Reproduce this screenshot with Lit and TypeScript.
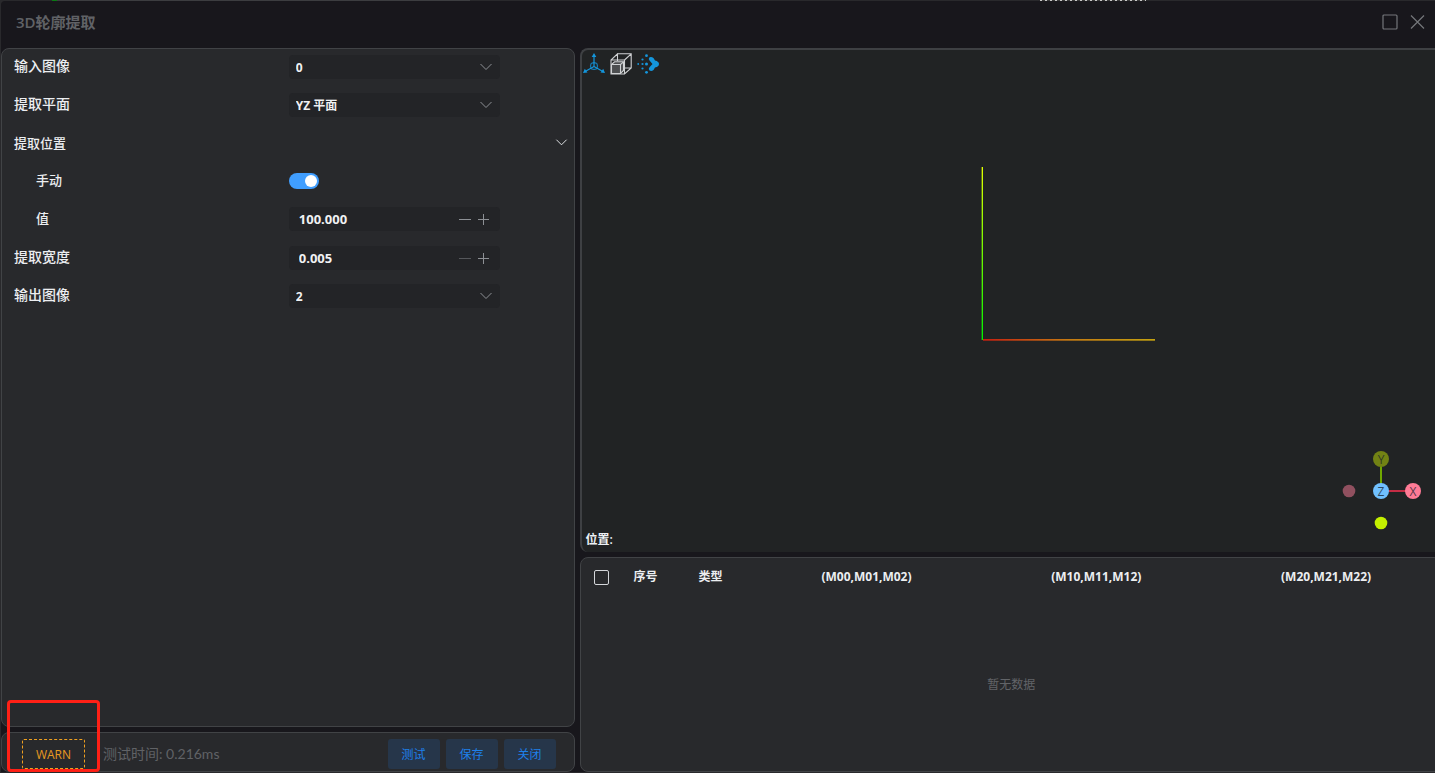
import { LitElement, html, css, svg } from "lit";
import { customElement, property, state } from "lit/decorators.js";

const chevron = svg`<path d="M1.5 4 L7 9.5 L12.5 4" fill="none" stroke="currentColor" stroke-width="1"/>`;

@customElement("select-field")
class SelectField extends LitElement {
  static styles = css`
    :host { display: grid; height: 24px; min-width: 0; }
    .select, .arrow { grid-area: 1 / 1; }
    .select {
      appearance: none; width: 100%; height: 24px; margin: 0; padding: 1px 30px 0 7px;
      border: 0; border-radius: 4px; background: #232427; color: #f0f1f3;
      font: 700 12px/23px "Open Sans", "Noto Sans CJK SC", sans-serif; outline: none;
    }
    .arrow { justify-self: end; align-self: center; width: 14px; height: 14px; margin-right: 7px; color: #8d9095; pointer-events: none; }
  `;
  @property() value = "";
  @property() label = "";
  render() {
    return html`<select class="select" aria-label=${this.label}><option>${this.value}</option></select>
      <svg class="arrow" viewBox="0 0 14 14">${chevron}</svg>`;
  }
}

@customElement("number-field")
class NumberField extends LitElement {
  static styles = css`
    :host { display: flex; align-items: center; height: 24px; min-width: 0; border-radius: 4px; background: #232427; padding-right: 8px; box-sizing: border-box; }
    .input {
      flex: 1; min-width: 0; height: 24px; margin: 0; padding: 0 0 0 10px; border: 0; background: none;
      color: #f0f1f3; font: 700 13px/24px "Open Sans", "Noto Sans CJK SC", sans-serif; outline: none;
    }
    .step { display: flex; align-items: center; justify-content: center; width: 18px; height: 24px; padding: 0; border: 0; background: none; color: #8d9095; }
    .step:disabled { color: #55575b; }
    .glyph { width: 12px; height: 12px; }
  `;
  @property() value = "";
  @property() label = "";
  @property({ type: Boolean }) atMin = false;
  render() {
    return html`<input class="input" type="text" inputmode="decimal" aria-label=${this.label} .value=${this.value} />
      <button class="step" aria-label="减少" ?disabled=${this.atMin}><svg class="glyph" viewBox="0 0 12 12"><path d="M0 6.5H12" stroke="currentColor"/></svg></button>
      <button class="step" aria-label="增加"><svg class="glyph" viewBox="0 0 12 12"><path d="M1 6.5H12M6.5 1V12" stroke="currentColor"/></svg></button>`;
  }
}

@customElement("scene-view")
class SceneView extends LitElement {
  static styles = css`
    :host {
      position: relative; display: flex; flex-direction: column; justify-content: space-between; box-sizing: border-box;
      border: solid #3e4043; border-width: 2px 0 0 2px; border-radius: 8px 0 0 8px; background: #212324; overflow: hidden;
    }
    .tools { display: flex; gap: 5px; padding: 3px 0 0 1px; }
    .tool { display: flex; padding: 0; border: 0; background: none; width: 22px; height: 22px; }
    .position { padding: 0 4px 3px; color: #eef2f6; font-size: 12px; font-weight: 600; line-height: 18px; }
    .axes { position: absolute; left: 399px; top: 117px; width: 175px; height: 175px; }
    .gizmo { position: absolute; right: 13px; bottom: 20px; width: 84px; height: 84px; }
    .letter { font: 12px "Open Sans", sans-serif; fill: #16202c; fill-opacity: 0.75; text-anchor: middle; }
  `;
  render() {
    return html`
      <div class="tools">
        <button class="tool" aria-label="坐标轴">
          <svg width="22" height="22" viewBox="0 0 22 22" fill="none" stroke="#1496dc">
            <path d="M11 3V13.500M11 13.500L3 18M11 13.500L19 18" stroke-width="1.200"/>
            <circle cx="11" cy="13" r="3.700" stroke-width="1" stroke-opacity=".7"/>
            <path d="M8 10.500H14V16H8Z" stroke-width=".7" stroke-opacity=".5"/>
            <path d="M11 0L13.300 4H8.700ZM0 20L1.800 15.800L4.500 19.500ZM22 20L20.200 15.800L17.500 19.500Z" fill="#1496dc" stroke="none"/>
          </svg>
        </button>
        <button class="tool" aria-label="立方体">
          <svg width="22" height="22" viewBox="0 0 22 22" fill="none" stroke="#cfd1d3" stroke-width="1.100">
            <path d="M1 7H14.500M7.500 .8H21.200V15L14.500 21H1V7L7.500 .8V8M14.500 7L21.200 .8M14.500 7V21M14 15H21.200"/>
            <path d="M1.500 11.500L4.500 8.800H13.500V17.500L10.500 20.500H1.500Z" fill="#4c4e50"/>
            <path d="M1.500 11.500H10.500V20.500M10.500 11.500L13.500 8.800"/>
          </svg>
        </button>
        <button class="tool" aria-label="点云">
          <svg width="22" height="22" viewBox="0 0 22 22" fill="#1496dc">
            <path d="M12.500 4.300Q14.500 3.300 16.500 5L18 7.500Q22 8.500 22 11Q22 13.500 18 14.500L16.500 17Q14.500 18.700 12.500 17.500Q11 16 12.500 14.300L15.500 11L12.500 7.500Q11 6 12.500 4.300Z"/>
            <circle cx="9.500" cy="2.700" r="1.400"/><circle cx="5.500" cy="6.500" r="1.100"/><circle cx="9.500" cy="11" r="1.500"/>
            <circle cx="5.500" cy="11" r="1.100"/><circle cx="1.200" cy="11" r=".9"/><circle cx="5.500" cy="15.500" r="1.100"/><circle cx="9.500" cy="19.300" r="1.400"/>
          </svg>
        </button>
      </div>
      <svg class="axes" viewBox="0 0 175 175">
        <defs>
          <linearGradient id="gy" x1="0" y1="1" x2="0" y2="0"><stop stop-color="#00f000"/><stop offset="1" stop-color="#e0ff00"/></linearGradient>
          <linearGradient id="gx"><stop stop-color="#c81e10"/><stop offset=".5" stop-color="#c47a12"/><stop offset="1" stop-color="#c4a210"/></linearGradient>
        </defs>
        <rect x="0" y="0" width="1" height="173" fill="url(#gy)" fill-opacity=".35"/>
        <rect x="1" y="0" width="1" height="173" fill="url(#gy)"/>
        <rect x="2" y="172" width="172" height="1" fill="url(#gx)"/>
        <rect x="2" y="173" width="172" height="1" fill="url(#gx)" fill-opacity=".7"/>
      </svg>
      <svg class="gizmo" viewBox="-43 -43 84 84">
        <path d="M0 0V-32" stroke="#70a800" stroke-width="2"/>
        <path d="M0 0H32" stroke="#c42c44" stroke-width="2"/>
        <circle cx="-32" r="6.300" fill="#90505f"/><circle cy="32" r="6.300" fill="#c4f000"/>
        <circle cy="-32" r="8" fill="#728214"/><circle cx="32" r="8" fill="#ff7b96"/><circle r="8" fill="#70c0ff"/>
        <text class="letter" x="0" y="-27.500">Y</text><text class="letter" x="32" y="4.500">X</text><text class="letter" x="0" y="4.500">Z</text>
      </svg>
      <div class="position">位置:</div>`;
  }
}

@customElement("app-root")
class AppRoot extends LitElement {
  static styles = css`
    :host {
      display: flex; flex-direction: column; box-sizing: border-box; height: 100vh; overflow: hidden; position: relative;
      padding: 1px 0 1px 1px; color: #eceef1;
      background:
        linear-gradient(90deg, transparent 52px, #0a7a14 52px 57px, #3c3d40 57px 470px, transparent 470px) 0 0 / 100% 1px no-repeat,
        repeating-linear-gradient(90deg, #c8c8c8 0 2px, #3a3a3a 2px 5px) 1040px 0 / 106px 1px no-repeat,
        #29292c;
      font-family: "Open Sans", "Noto Sans CJK SC", sans-serif; font-size: 14px;
    }
    .window { flex: 1; min-height: 0; display: flex; flex-direction: column; background: #18171c; border-radius: 4px 0 0 0; }
    .title-bar { flex: none; display: flex; align-items: center; justify-content: space-between; height: 47px; padding: 0 10px 6px 15px; box-sizing: border-box; color: #606266; }
    .title { margin: 0; font-size: 15px; line-height: 22px; font-weight: 600; }
    .window-actions { display: flex; gap: 12px; }
    .window-action { display: flex; padding: 0; border: 0; background: none; color: #74767a; }
    .body { flex: 1; min-height: 0; display: grid; grid-template-columns: 40% minmax(0, 1fr); gap: 5px; }
    .column { display: flex; flex-direction: column; gap: 5px; min-height: 0; min-width: 0; }
    .card { box-sizing: border-box; border: 1px solid #414346; border-radius: 8px; background: #28292c; }
    .params { flex: 1; display: flex; flex-direction: column; gap: 14px; padding: 6px 6px 6px 12px; }
    .group { display: flex; flex-direction: column; gap: 14px; padding-bottom: 1px; }
    .row { display: grid; grid-template-columns: 275fr 211fr 68fr; align-items: center; height: 24px; }
    .label { font-weight: 500; line-height: 20px; padding-bottom: 2px; }
    .sub { font-size: 13px; }
    .nested { padding-left: 22px; }
    .fold { display: flex; align-items: center; justify-content: space-between; height: 24px; padding: 0 0 2px; border: 0; background: none; color: #eceef1; font-family: inherit; font-size: 13px; font-weight: 500; }
    .fold-arrow { width: 13px; height: 13px; }
    .switch { appearance: none; display: flex; align-items: center; justify-content: flex-end; width: 30px; height: 16px; margin: 0; padding: 0 2px; box-sizing: border-box; border-radius: 8px; background: #409eff; }
    .switch::before { content: ""; width: 12px; height: 12px; border-radius: 50%; background: #fff; }
    .switch:not(:checked) { justify-content: flex-start; background: #4c4d4f; }
    .footer { flex: none; display: flex; align-items: center; gap: 18px; height: 40px; padding: 4px 18px 0 20px; }
    .badge { box-sizing: border-box; width: 63px; height: 30px; border: 1px dashed #f0a020; border-radius: 2px; color: #e89a20; font-size: 12px; line-height: 29px; font-weight: 500; text-align: center; }
    .elapsed { flex: 1; color: #606266; font-family: Lato, "Noto Sans CJK SC", sans-serif; line-height: 20px; }
    .actions { display: flex; gap: 6px; }
    .action { width: 52px; height: 30px; padding: 0; border: 0; border-radius: 3px; background: #26364a; color: #1e80ea; font-family: inherit; font-size: 12px; }
    .scene { flex: 1; min-height: 0; }
    .data { flex: none; height: 215px; margin-right: -7px; padding-left: 1px; overflow: hidden; }
    .table { width: 100%; border-collapse: collapse; table-layout: fixed; font-size: 12px; line-height: 20px; }
    .head { padding: 9px 12px; font-weight: 700; text-align: left; }
    .head.pick { width: 16px; }
    .head.narrow { width: 41px; }
    .head.matrix { text-align: center; }
    .check { appearance: none; display: block; width: 15px; height: 15px; margin: 1px 0 0; border: 1px solid #d4d6da; border-radius: 2px; box-sizing: border-box; }
    .empty { padding: 79px 0 0; text-align: center; color: #626468; }
    .highlight { position: absolute; left: 7px; bottom: 1px; width: 93px; height: 72px; box-sizing: border-box; border: 3px solid #ff2016; border-radius: 4px; pointer-events: none; }
  `;

  @state() private manual = true;
  @state() private open = true;

  render() {
    return html`
      <main class="window">
        <header class="title-bar">
          <h1 class="title">3D轮廓提取</h1>
          <div class="window-actions">
            <button class="window-action" aria-label="最大化"><svg width="16" height="16" viewBox="0 0 16 16"><rect x="1" y="1" width="14" height="14" rx="1" fill="none" stroke="currentColor" stroke-width="1.200"/></svg></button>
            <button class="window-action" aria-label="关闭窗口"><svg width="15" height="16" viewBox="0 0 15 16"><path d="M1 1.500L14 14.500M14 1.500L1 14.500" stroke="currentColor" stroke-width="1.200"/></svg></button>
          </div>
        </header>
        <div class="body">
          <div class="column">
            <section class="card params">
              <div class="row"><span class="label">输入图像</span><select-field label="输入图像" value="0"></select-field></div>
              <div class="row"><span class="label">提取平面</span><select-field label="提取平面" value="YZ 平面"></select-field></div>
              <div class="group">
                <button class="fold" aria-expanded=${this.open} @click=${() => (this.open = !this.open)}>
                  提取位置<svg class="fold-arrow" viewBox="0 0 14 14">${chevron}</svg>
                </button>
                ${this.open
                  ? html`<div class="row"><label class="label sub nested" for="manual">手动</label>
                        <input class="switch" id="manual" type="checkbox" role="switch" .checked=${this.manual}
                          @change=${(e: Event) => (this.manual = (e.target as HTMLInputElement).checked)} /></div>
                      <div class="row"><span class="label sub nested">值</span><number-field label="值" value="100.000"></number-field></div>`
                  : null}
              </div>
              <div class="row"><span class="label">提取宽度</span><number-field label="提取宽度" value="0.005" .atMin=${true}></number-field></div>
              <div class="row"><span class="label">输出图像</span><select-field label="输出图像" value="2"></select-field></div>
            </section>
            <footer class="card footer">
              <span class="badge">WARN</span>
              <span class="elapsed">测试时间: 0.216ms</span>
              <div class="actions">
                ${["测试", "保存", "关闭"].map((t) => html`<button class="action">${t}</button>`)}
              </div>
            </footer>
          </div>
          <div class="column">
            <scene-view class="scene"></scene-view>
            <section class="card data">
              <table class="table">
                <thead>
                  <tr>
                    <th class="head pick"><input class="check" type="checkbox" aria-label="全选" /></th>
                    <th class="head narrow">序号</th>
                    <th class="head narrow">类型</th>
                    ${["(M00,M01,M02)", "(M10,M11,M12)", "(M20,M21,M22)"].map((t) => html`<th class="head matrix">${t}</th>`)}
                  </tr>
                </thead>
                <tbody><tr><td class="empty" colspan="6">暂无数据</td></tr></tbody>
              </table>
            </section>
          </div>
        </div>
      </main>
      <div class="highlight"></div>`;
  }
}
